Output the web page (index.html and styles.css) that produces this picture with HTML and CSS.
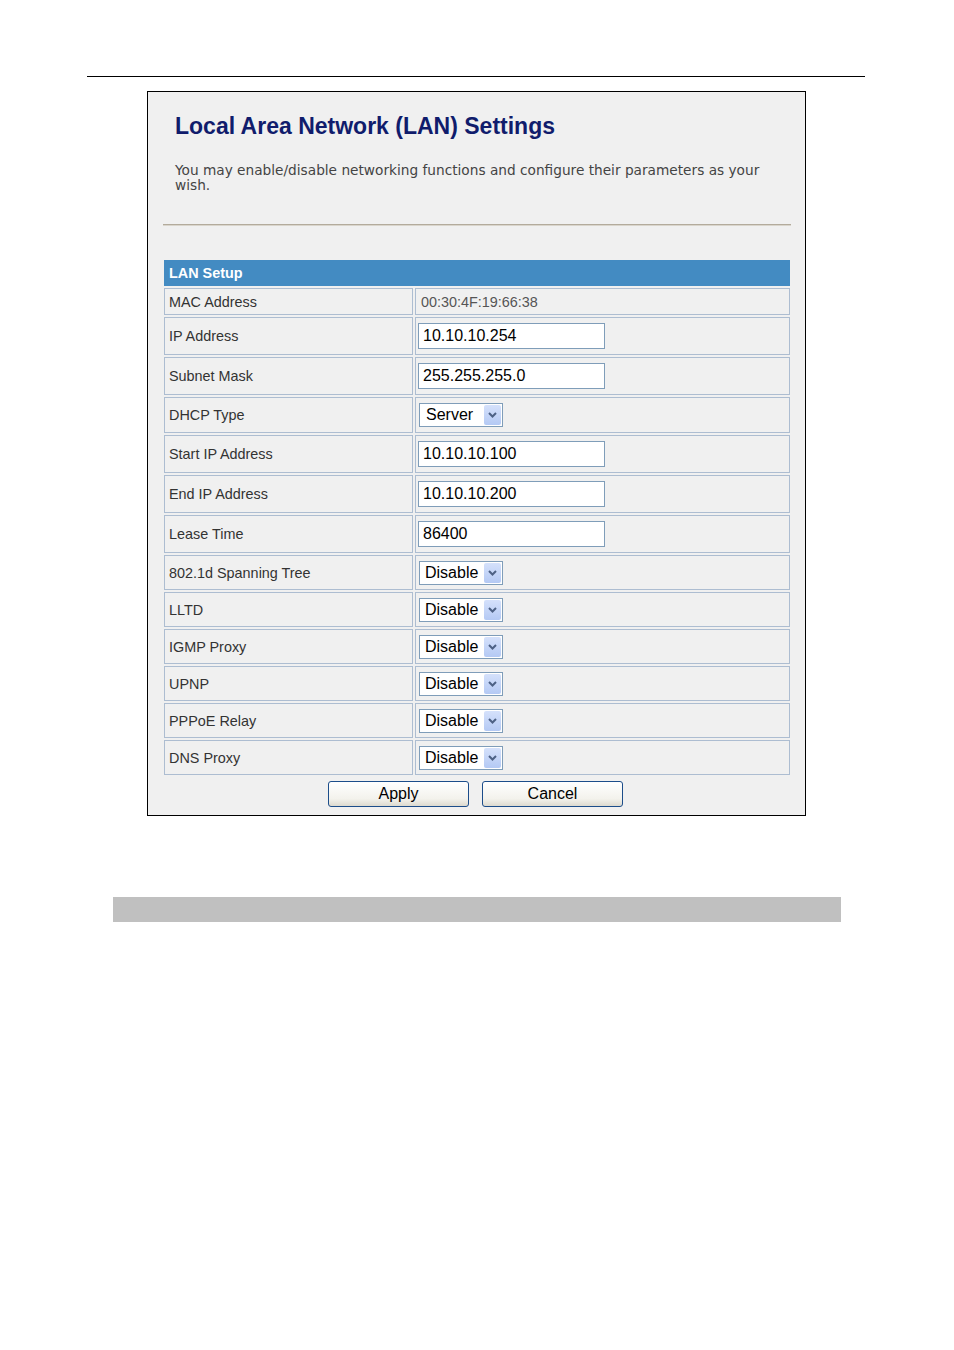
FILE: index.html
```html
<!DOCTYPE html>
<html>
<head>
<meta charset="utf-8">
<link rel="stylesheet" href="styles.css">
</head>
<body>
<div class="rule"></div>
<div class="panel">
  <h1 class="title">Local Area Network (LAN) Settings</h1>
  <p class="desc">You may enable/disable networking functions and configure their parameters as your wish.</p>
  <div class="hr"></div>
  <table class="setup">
    <tr><td colspan="2" class="head">LAN Setup</td></tr>
    <tr class="r-mac"><td class="lbl">MAC Address</td><td class="val mac">00:30:4F:19:66:38</td></tr>
    <tr class="r-in"><td class="lbl">IP Address</td><td class="val"><span class="inp">10.10.10.254</span></td></tr>
    <tr class="r-in"><td class="lbl">Subnet Mask</td><td class="val"><span class="inp">255.255.255.0</span></td></tr>
    <tr class="r-sel r-dhcp"><td class="lbl">DHCP Type</td><td class="val"><span class="sel"><span class="opt srv">Server</span><span class="arr"><svg width="9" height="6" viewBox="0 0 9 6"><path d="M1 1 L4.5 4.5 L8 1" fill="none" stroke="#4d6185" stroke-width="2"/></svg></span></span></td></tr>
    <tr class="r-in"><td class="lbl">Start IP Address</td><td class="val"><span class="inp">10.10.10.100</span></td></tr>
    <tr class="r-in"><td class="lbl">End IP Address</td><td class="val"><span class="inp">10.10.10.200</span></td></tr>
    <tr class="r-in"><td class="lbl">Lease Time</td><td class="val"><span class="inp">86400</span></td></tr>
    <tr class="r-sel"><td class="lbl">802.1d Spanning Tree</td><td class="val"><span class="sel"><span class="opt">Disable</span><span class="arr"><svg width="9" height="6" viewBox="0 0 9 6"><path d="M1 1 L4.5 4.5 L8 1" fill="none" stroke="#4d6185" stroke-width="2"/></svg></span></span></td></tr>
    <tr class="r-sel"><td class="lbl">LLTD</td><td class="val"><span class="sel"><span class="opt">Disable</span><span class="arr"><svg width="9" height="6" viewBox="0 0 9 6"><path d="M1 1 L4.5 4.5 L8 1" fill="none" stroke="#4d6185" stroke-width="2"/></svg></span></span></td></tr>
    <tr class="r-sel"><td class="lbl">IGMP Proxy</td><td class="val"><span class="sel"><span class="opt">Disable</span><span class="arr"><svg width="9" height="6" viewBox="0 0 9 6"><path d="M1 1 L4.5 4.5 L8 1" fill="none" stroke="#4d6185" stroke-width="2"/></svg></span></span></td></tr>
    <tr class="r-sel"><td class="lbl">UPNP</td><td class="val"><span class="sel"><span class="opt">Disable</span><span class="arr"><svg width="9" height="6" viewBox="0 0 9 6"><path d="M1 1 L4.5 4.5 L8 1" fill="none" stroke="#4d6185" stroke-width="2"/></svg></span></span></td></tr>
    <tr class="r-sel"><td class="lbl">PPPoE Relay</td><td class="val"><span class="sel"><span class="opt">Disable</span><span class="arr"><svg width="9" height="6" viewBox="0 0 9 6"><path d="M1 1 L4.5 4.5 L8 1" fill="none" stroke="#4d6185" stroke-width="2"/></svg></span></span></td></tr>
    <tr class="r-sel"><td class="lbl">DNS Proxy</td><td class="val"><span class="sel"><span class="opt">Disable</span><span class="arr"><svg width="9" height="6" viewBox="0 0 9 6"><path d="M1 1 L4.5 4.5 L8 1" fill="none" stroke="#4d6185" stroke-width="2"/></svg></span></span></td></tr>
  </table>
  <div class="buttons">
    <span class="btn">Apply</span>
    <span class="btn">Cancel</span>
  </div>
</div>
<div class="graybar"></div>
</body>
</html>
```
FILE: styles.css
```css
html, body {
  margin: 0;
  padding: 0;
  background: #ffffff;
}
body {
  font-family: "Liberation Sans", Arial, sans-serif;
  width: 954px;
  height: 1350px;
}
.rule {
  margin: 76px 0 0 87px;
  width: 778px;
  height: 1px;
  background: #000;
}
.panel {
  margin: 14px 0 0 147px;
  width: 657px;
  height: 723px;
  border: 1px solid #000;
  background: #f0f0f0;
  box-sizing: content-box;
}
.title {
  margin: 0;
  padding: 20px 0 0 27px;
  font-family: "Liberation Sans", Arial, sans-serif;
  font-weight: bold;
  font-size: 23px;
  line-height: 28px;
  color: #101c6c;
}
.desc {
  margin: 23px 40px 0 27px;
  font-family: "DejaVu Sans", Verdana, sans-serif;
  font-size: 13.7px;
  line-height: 15px;
  color: #444;
}
.hr {
  margin: 31px 14px 0 15px;
  height: 1px;
  background: #b3ab9c;
  border-bottom: 1px solid #d9d5cc;
}
.setup {
  margin: 32px 0 0 14px;
  width: 630px;
  border-collapse: separate;
  border-spacing: 2px;
  font-size: 14.4px;
  color: #333;
}
.setup td {
  border: 1px solid #adbdd1;
  padding: 0 0 0 4px;
  vertical-align: middle;
}
.setup td.head {
  background: #438bc2;
  border: 1px solid #438bc2;
  color: #fff;
  font-weight: bold;
  height: 24px;
  padding-left: 4px;
}
.lbl {
  width: 243px;
}
.r-mac td { height: 25px; }
.r-in td { height: 36px; }
.r-sel td { height: 33px; }
.r-dhcp td { height: 34px; }
.val.mac { color: #555; padding-left: 5px !important; }
.val { padding-left: 2px !important; }
.inp {
  display: flex;
  align-items: center;
  width: 181px;
  height: 24px;
  border: 1px solid #7f9db9;
  background: #fff;
  padding-left: 4px;
  font-size: 16px;
  color: #000;
  box-sizing: content-box;
}
.sel {
  display: flex;
  align-items: center;
  width: 82px;
  height: 22px;
  border: 1px solid #7f9db9;
  background: #fff;
  margin-left: 1px;
  font-size: 16px;
  color: #000;
}
.opt {
  flex: 1;
  padding-left: 5px;
}
.opt.srv { padding-left: 6px; }
.arr {
  width: 17px;
  height: 20px;
  margin-right: 1px;
  display: flex;
  align-items: center;
  justify-content: center;
  background: linear-gradient(#d5e1fb, #b4c9f4);
  border-radius: 2px;
}
.buttons {
  display: flex;
  justify-content: flex-start;
  gap: 13px;
  margin: 4px 0 0 180px;
}
.btn {
  display: flex;
  align-items: center;
  justify-content: center;
  width: 139px;
  height: 24px;
  border: 1px solid #1c4d8a;
  border-radius: 3px;
  background: linear-gradient(#ffffff, #f3f2ec 70%, #dcd9cf);
  font-size: 16px;
  color: #000;
}
.graybar {
  margin: 81px 0 0 113px;
  width: 728px;
  height: 25px;
  background: #c0c0c0;
}
```
